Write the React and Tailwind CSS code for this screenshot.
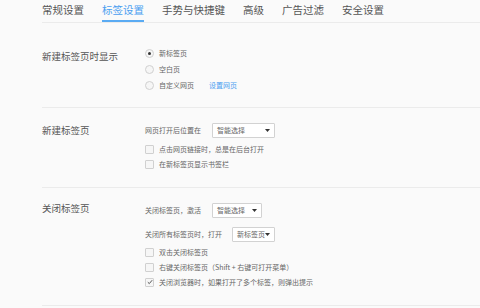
import React from 'react';

const tabs = ['常规设置', '标签设置', '手势与快捷键', '高级', '广告过滤', '安全设置'];

const Radio = ({ checked, children }) => (
    <div className="flex items-center h-4">
        <span className="w-[9px] h-[9px] rounded-full border border-[#d0d0d0] bg-[#f6f6f6] flex items-center justify-center">
            {checked && <span className="w-[3px] h-[3px] rounded-full bg-[#333]" />}
        </span>
        <span className="ml-[5px] text-[7px] text-[#666] whitespace-nowrap">{children}</span>
    </div>
);

const Checkbox = ({ checked, children }) => (
    <div className="flex items-center h-[15px]">
        <span className="w-[9px] h-[9px] rounded-[1px] border border-[#d0d0d0] bg-[#f6f6f6] flex items-center justify-center">
            {checked && (
                <svg width="6" height="6" viewBox="0 0 6 6">
                    <path d="M0.8 3.2 L2.3 4.6 L5.2 1.2" fill="none" stroke="#444" strokeWidth="0.9" />
                </svg>
            )}
        </span>
        <span className="ml-[5px] text-[7px] text-[#666] whitespace-nowrap">{children}</span>
    </div>
);

const Select = ({ value, width }) => (
    <div
        className={`h-[15px] border border-[#d2d2d2] bg-white rounded-[1px] flex items-center justify-between pl-[4px] pr-[4px] ${width}`}
    >
        <span className="text-[7px] text-[#666] whitespace-nowrap">{value}</span>
        <svg width="5" height="3" viewBox="0 0 5 3" className="shrink-0">
            <path d="M0 0 L5 0 L2.5 3 Z" fill="#333" />
        </svg>
    </div>
);

const Section = ({ label, labelClass, children, className }) => (
    <div className={`flex border-b border-[#ebebeb] ${className}`}>
        <div className={`w-[103px] shrink-0 text-[9.5px] text-[#555] leading-[15px] ${labelClass}`}>{label}</div>
        <div className="flex flex-col">{children}</div>
    </div>
);

export default function App() {
    return (
        <div
            className="w-[480px] h-[308px] bg-[#fafafa] overflow-hidden pl-[42px]"
            style={{ fontFamily: '"Noto Sans CJK SC", "Noto Sans", sans-serif' }}
        >
            {/* Tabs */}
            <div className="flex gap-[18px] border-b border-[#ebebeb]">
                {tabs.map((t, i) => (
                    <div
                        key={t}
                        className={`h-[22px] flex items-center text-[10.5px] border-b-2 ${i === 1 ? 'border-[#5aabf3] text-[#4a9ef0]' : 'border-transparent text-[#555]'}`}
                    >
                        {t}
                    </div>
                ))}
            </div>

            <Section label="新建标签页时显示" labelClass="pt-[4px]" className="pt-[22px] pb-[14px]">
                <Radio checked>新标签页</Radio>
                <Radio>空白页</Radio>
                <div className="flex items-center">
                    <Radio>自定义网页</Radio>
                    <span className="ml-[15px] text-[7px] text-[#4a9ef0]">设置网页</span>
                </div>
            </Section>

            <Section label="新建标签页" className="pt-[15px] pb-[15px]">
                <div className="flex items-center h-[15px]">
                    <span className="text-[7px] text-[#666]">网页打开后位置在</span>
                    <div className="ml-[11px]">
                        <Select value="智能选择" width="w-[63px]" />
                    </div>
                </div>
                <div className="mt-1">
                    <Checkbox>点击网页链接时，总是在后台打开</Checkbox>
                    <Checkbox>在新标签页显示书签栏</Checkbox>
                </div>
            </Section>

            <Section label="关闭标签页" labelClass="-mt-[2px]" className="pt-[15px] pb-[15px]">
                <div className="flex items-center h-[15px]">
                    <span className="text-[7px] text-[#666]">关闭标签页，激活</span>
                    <div className="ml-[11px]">
                        <Select value="智能选择" width="w-[50px]" />
                    </div>
                </div>
                <div className="flex items-center h-[16px] mt-[8px]">
                    <span className="text-[7px] text-[#666] whitespace-nowrap">关闭所有标签页时，打开</span>
                    <div className="ml-[10px]">
                        <Select value="新标签页" width="w-[43px]" />
                    </div>
                </div>
                <div className="mt-[2.5px]">
                    <Checkbox>双击关闭标签页</Checkbox>
                    <Checkbox>右键关闭标签页（Shift + 右键可打开菜单）</Checkbox>
                    <Checkbox checked>关闭浏览器时，如果打开了多个标签，则弹出提示</Checkbox>
                </div>
            </Section>
        </div>
    );
}
